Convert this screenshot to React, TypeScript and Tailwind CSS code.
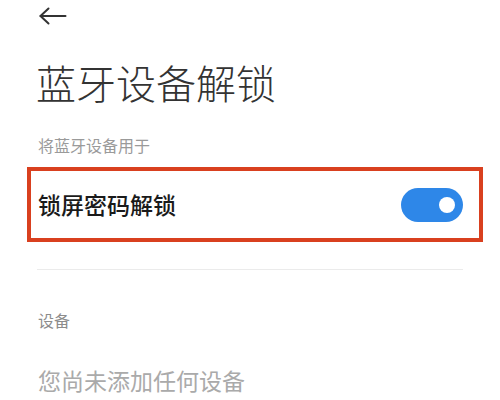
import React from "react";

const cjk = { fontFamily: '"Noto Sans CJK SC", "Noto Sans", sans-serif' };

const Toggle = () => (
  <div className="flex h-[34px] w-[62px] items-center justify-end rounded-full bg-[#2e87e8] pr-[8px]">
    <span className="h-[16px] w-[16px] rounded-full bg-white" />
  </div>
);

const App = () => {
  return (
    <div className="h-[400px] w-[500px] overflow-hidden bg-white" style={cjk}>
      <div className="flex h-[30px] items-center pl-[39px] pt-[1px]">
        <svg width="28" height="18" viewBox="0 0 28 18" fill="none" stroke="#333" strokeWidth="2" strokeLinecap="round" strokeLinejoin="round">
          <path d="M1.5 9 H26.5" />
          <path d="M9.5 1.5 L1.5 9 L9.5 16.5" />
        </svg>
      </div>
      <h1 className="mt-[32px] pl-[36px] text-[40px] leading-[40px] font-light text-[#333]">
        蓝牙设备解锁
      </h1>
      <div className="mt-[35px] pl-[38px] text-[16px] leading-[16px] text-[#9a9a9a]">
        将蓝牙设备用于
      </div>
      <div className="ml-[27px] mr-[17px] mt-[14px] flex h-[75px] items-center justify-between border-[4px] border-[#d9401f] pl-[7px] pr-[16px]">
        <span className="text-[23px] leading-[23px] font-medium text-[#1a1a1a]">锁屏密码解锁</span>
        <Toggle />
      </div>
      <div className="mx-[37px] mt-[27px] h-px bg-[#ebebeb]" />
      <div className="mt-[42px] pl-[38px] text-[16px] leading-[16px] text-[#8c8c8c]">设备</div>
      <div className="mt-[41px] pl-[38px] text-[23px] leading-[23px] text-[#aaaaaa]">
        您尚未添加任何设备
      </div>
    </div>
  );
};

export default App;
